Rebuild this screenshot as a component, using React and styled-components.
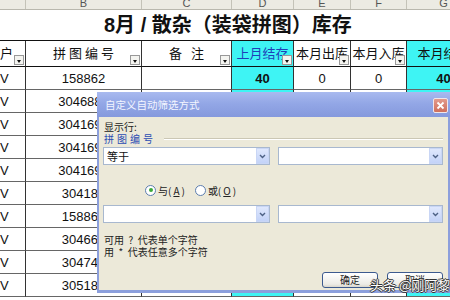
import React from "react";
import styled, { createGlobalStyle } from "styled-components";

const GlobalStyle = createGlobalStyle`
  body {
    margin: 0;
    background: #fff;
    font-family: "Liberation Sans", "Noto Sans CJK SC", sans-serif;
    overflow: hidden;
  }
`;

const COLS = "26px 116px 90px 62px 57px 56px 74px";

const Page = styled.div`
  position: relative;
  width: 450px;
  height: 300px;
  overflow: hidden;
  background: #fff;
`;

const ColBar = styled.div`
  display: grid;
  grid-template-columns: ${COLS};
  height: 10px;
  background: #ecebe3;
  border-bottom: 1px solid #b9b8ae;
  box-sizing: border-box;
  overflow: hidden;
`;

const ColLetter = styled.div`
  border-right: 1px solid #c4c3b8;
  font-size: 11px;
  line-height: 6px;
  color: #555;
  text-align: center;
  overflow: hidden;
`;

const TitleRow = styled.div`
  height: 30px;
  padding-left: 104px;
  font-size: 20px;
  font-weight: bold;
  line-height: 30px;
  color: #111;
  white-space: nowrap;
`;

const Row = styled.div`
  display: grid;
  grid-template-columns: ${COLS};
  height: ${(p) => p.$h}px;
  border-top: ${(p) => (p.$top ? "1px solid #111" : "none")};
  box-sizing: border-box;
`;

const Cell = styled.div`
  position: relative;
  box-sizing: border-box;
  border-right: 1px solid #333;
  border-bottom: 1px solid ${(p) => (p.$head ? "#111" : "#666")};
  background: ${(p) => (p.$cyan ? "#3ef4f4" : "#fff")};
  color: ${(p) => (p.$blue ? "#1f3fb8" : "#111")};
  font-size: 13px;
  font-weight: ${(p) => (p.$bold ? "bold" : "normal")};
  letter-spacing: ${(p) => p.$ls || 0}px;
  text-indent: ${(p) => p.$ls || 0}px;
  display: flex;
  align-items: center;
  justify-content: ${(p) => (p.$left ? "flex-start" : "center")};
  padding-bottom: ${(p) => (p.$head ? 3 : 0)}px;
  white-space: nowrap;
  overflow: hidden;
`;

const FilterBtn = styled.span`
  position: absolute;
  right: 1px;
  bottom: 1px;
  width: 10px;
  height: 10px;
  box-sizing: border-box;
  background: #f4f4f0;
  border: 1px solid #999;
  display: flex;
  align-items: center;
  justify-content: center;
  &::after {
    content: "";
    border-left: 2px solid transparent;
    border-right: 2px solid transparent;
    border-top: 3px solid #111;
    margin-top: 2px;
  }
`;

const Dialog = styled.div`
  position: absolute;
  left: 97px;
  top: 92px;
  width: 353px;
  height: 201px;
  box-sizing: border-box;
  border: 2px solid #8c9fdc;
  border-top: none;
  border-bottom-width: 3px;
  background: #ece9d9;
  display: flex;
  flex-direction: column;
`;

const TitleBar = styled.div`
  position: relative;
  height: 25px;
  margin: 0 -2px;
  padding-left: 8px;
  background: linear-gradient(180deg, #a9baef 0%, #93a7e6 45%, #8599dd 100%);
  color: #f3f5ff;
  font-size: 10.5px;
  line-height: 25px;
  font-family: "Noto Sans CJK SC", sans-serif;
`;

const CloseBtn = styled.div`
  position: absolute;
  right: 2px;
  top: 6px;
  width: 15px;
  height: 15px;
  box-sizing: border-box;
  border: 1px solid #f0e6ea;
  border-radius: 2px;
  background: linear-gradient(180deg, #e39a8c, #cf6f5c);
  display: flex;
  align-items: center;
  justify-content: center;
`;

const Body = styled.div`
  padding: 4px 5px 0 4px;
  font-family: "Noto Sans CJK SC", sans-serif;
  font-size: 10px;
  color: #222;
  display: flex;
  flex-direction: column;
`;

const Line = styled.div`
  height: 12px;
  line-height: 12px;
  padding-left: 1px;
  margin-top: ${(p) => p.$mt || 0}px;
  color: ${(p) => (p.$blue ? "#2b4cb3" : "#222")};
  letter-spacing: ${(p) => p.$ls || 0}px;
  display: flex;
  align-items: center;
  gap: 8px;
  white-space: pre;
`;

const Rule = styled.span`
  flex: 1;
  height: 0;
  border-top: 1px solid #cbc7b4;
  border-bottom: 1px solid #fff;
`;

const ComboRow = styled.div`
  display: flex;
  gap: 8px;
  margin-top: ${(p) => p.$mt}px;
`;

const Combo = styled.div`
  width: ${(p) => p.$w}px;
  height: 18px;
  box-sizing: border-box;
  border: 1px solid #a8b8cf;
  background: #fff;
  display: flex;
  align-items: center;
  padding-left: 3px;
  font-size: 11px;
  color: #111;
`;

const ComboText = styled.span`
  flex: 1;
`;

const DropBtn = styled.span`
  width: 13px;
  height: 16px;
  box-sizing: border-box;
  border: 1px solid #c9d6f5;
  background: linear-gradient(180deg, #dfe8fd, #c3d3f8);
  display: flex;
  align-items: center;
  justify-content: center;
`;

const RadioRow = styled.div`
  height: 20px;
  margin-top: 15px;
  padding-left: 42px;
  display: flex;
  align-items: center;
  gap: 10px;
  font-size: 10px;
`;

const RadioLabel = styled.label`
  display: flex;
  align-items: center;
  gap: 2px;
`;

const Radio = styled.span`
  width: 9px;
  height: 9px;
  border-radius: 50%;
  border: 1px solid #5d7eaf;
  background: #fff;
  display: flex;
  align-items: center;
  justify-content: center;
  &::after {
    content: "";
    width: 4px;
    height: 4px;
    border-radius: 50%;
    background: ${(p) => (p.$on ? "#3aa83a" : "transparent")};
  }
`;

const Key = styled.u`
  text-decoration: underline;
`;

const Buttons = styled.div`
  margin-top: 14px;
  display: flex;
  justify-content: flex-end;
  gap: 9px;
`;

const Button = styled.div`
  width: 56px;
  height: 16px;
  box-sizing: border-box;
  border: 1px solid #3c5a8f;
  border-radius: 3px;
  background: linear-gradient(180deg, #ffffff, #ecebe6 80%, #d8d6cc);
  font-size: 10px;
  line-height: 14px;
  text-align: center;
  color: #222;
`;

const Watermark = styled.div`
  position: absolute;
  left: 370px;
  top: 275px;
  font-family: "Noto Sans CJK SC", sans-serif;
  font-size: 13px;
  color: #fff;
  text-shadow: -1px 0 #333, 1px 0 #333, 0 -1px #333, 0 1px #333;
  white-space: nowrap;
`;

const Chevron = () => (
  <svg width="7" height="5" viewBox="0 0 7 5">
    <path d="M1 1 L3.5 3.5 L6 1" fill="none" stroke="#4d6185" strokeWidth="1.4" />
  </svg>
);

const Cross = () => (
  <svg width="9" height="9" viewBox="0 0 9 9">
    <path d="M1.5 1.5 L7.5 7.5 M7.5 1.5 L1.5 7.5" stroke="#fff" strokeWidth="1.8" />
  </svg>
);

const letters = ["", "B", "C", "D", "E", "F", "G"];
const codes = ["3046881", "3041691", "3041692", "3041693", "304183", "158863", "304667", "304742", "305186"];

const App = () => (
  <>
    <GlobalStyle />
    <Page>
      <ColBar>
        {letters.map((l, i) => (
          <ColLetter key={i}>{l}</ColLetter>
        ))}
      </ColBar>
      <TitleRow>8月 / 散杂（装袋拼图）库存</TitleRow>
      <Row $h={27} $top>
        <Cell $head $left>户<FilterBtn /></Cell>
        <Cell $head $ls={3}>拼图编号<FilterBtn /></Cell>
        <Cell $head $ls={9}>备注<FilterBtn /></Cell>
        <Cell $head $cyan $blue>上月结存<FilterBtn /></Cell>
        <Cell $head>本月出库<FilterBtn /></Cell>
        <Cell $head>本月入库<FilterBtn /></Cell>
        <Cell $head $cyan>本月结存</Cell>
      </Row>
      <Row $h={23}>
        <Cell $left>V</Cell>
        <Cell>158862</Cell>
        <Cell />
        <Cell $cyan $bold>40</Cell>
        <Cell>0</Cell>
        <Cell>0</Cell>
        <Cell $cyan $bold>40</Cell>
      </Row>
      {codes.map((c, i) => (
        <Row $h={23} key={i}>
          <Cell $left>V</Cell>
          <Cell>{c}</Cell>
          <Cell />
          <Cell $cyan $bold>40</Cell>
          <Cell>0</Cell>
          <Cell>0</Cell>
          <Cell $cyan $bold>40</Cell>
        </Row>
      ))}

      <Dialog>
        <TitleBar>
          自定义自动筛选方式
          <CloseBtn><Cross /></CloseBtn>
        </TitleBar>
        <Body>
          <Line>显示行:</Line>
          <Line $blue $ls={3}>拼图编号<Rule /></Line>
          <ComboRow $mt={2}>
            <Combo $w={167}><ComboText>等于</ComboText><DropBtn><Chevron /></DropBtn></Combo>
            <Combo $w={165}><ComboText /><DropBtn><Chevron /></DropBtn></Combo>
          </ComboRow>
          <RadioRow>
            <RadioLabel><Radio $on />与(<Key>A</Key>)</RadioLabel>
            <RadioLabel><Radio />或(<Key>O</Key>)</RadioLabel>
          </RadioRow>
          <ComboRow $mt={5}>
            <Combo $w={167}><ComboText /><DropBtn><Chevron /></DropBtn></Combo>
            <Combo $w={165}><ComboText /><DropBtn><Chevron /></DropBtn></Combo>
          </ComboRow>
          <Line $mt={11}>{"可用  ?  代表单个字符"}</Line>
          <Line>{"用  *  代表任意多个字符"}</Line>
          <Buttons>
            <Button>确定</Button>
            <Button>取消</Button>
          </Buttons>
        </Body>
      </Dialog>
      <Watermark>头条 @刚阿黎</Watermark>
    </Page>
  </>
);

export default App;
